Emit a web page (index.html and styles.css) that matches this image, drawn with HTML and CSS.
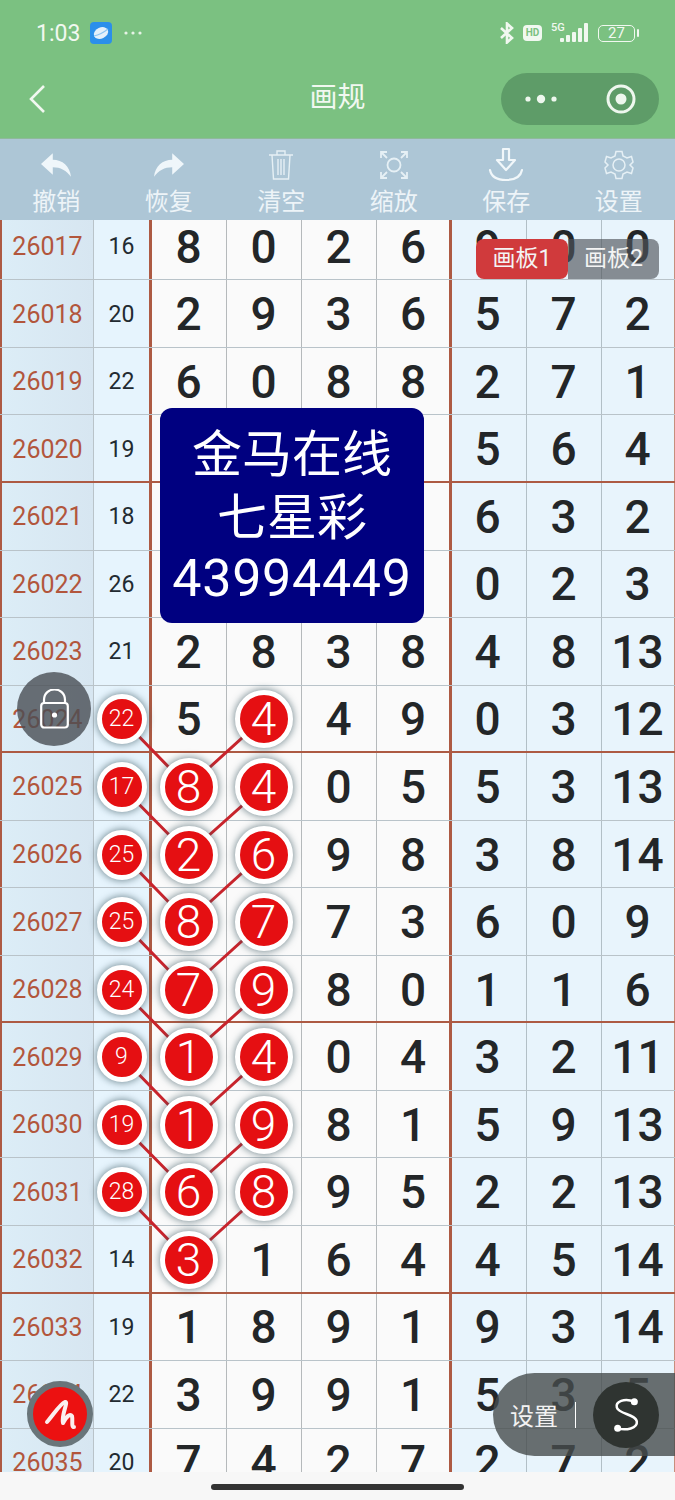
FILE: index.html
```html
<!DOCTYPE html>
<html lang="zh-CN">
<head>
    <meta charset="UTF-8">
    <meta name="viewport" content="width=device-width, initial-scale=1.0">
    <title>画规</title>
    <link rel="stylesheet" href="styles.css">
</head>
<body>
<div class="screen">

    <header class="top">
        <div class="status">
            <div class="status-left">
                <span class="clock">1:03</span>
                <svg class="app-dot" width="22" height="22" viewBox="0 0 22 22">
                    <rect width="22" height="22" rx="4" fill="#2b8fea"/>
                    <ellipse cx="11" cy="11" rx="7.5" ry="5.5" fill="#e4f0fa" transform="rotate(-25 11 11)"/>
                    <path d="M4 14 Q11 12.5 18 7" stroke="#8cc4f2" stroke-width="1.2" fill="none"/>
                </svg>
                <svg width="18" height="4" viewBox="0 0 18 4" fill="#e6f3e6">
                    <circle cx="2" cy="2" r="1.6"/><circle cx="9" cy="2" r="1.6"/><circle cx="16" cy="2" r="1.6"/>
                </svg>
            </div>
            <div class="status-right">
                <svg width="14" height="22" viewBox="0 0 14 22" fill="none" stroke="#f1f8f0" stroke-width="2.6">
                    <path d="M1 6 L12 16 L7 20.5 V1.5 L12 6 L1 16"/>
                </svg>
                <span class="hd">HD</span>
                <span class="net">
                    <span class="net-label">5G</span>
                    <svg width="28" height="20" viewBox="0 0 28 20" fill="#f1f8f0">
                        <rect x="0" y="15" width="4" height="4" rx="1"/>
                        <rect x="6" y="12" width="4" height="7" rx="1"/>
                        <rect x="12" y="9" width="4" height="10" rx="1"/>
                        <rect x="18" y="5" width="4" height="14" rx="1"/>
                        <rect x="24" y="0" width="4" height="19" rx="1"/>
                    </svg>
                </span>
                <span class="battery">27</span>
            </div>
        </div>
        <div class="nav">
            <svg class="back" width="18" height="30" viewBox="0 0 18 30" fill="none" stroke="#f1f8f0" stroke-width="2.6">
                <path d="M16 2 L3 15 L16 28"/>
            </svg>
            <span class="title">画规</span>
            <div class="capsule">
                <svg width="34" height="12" viewBox="0 0 34 12" fill="#eef7ee">
                    <circle cx="4" cy="6" r="2.6"/><circle cx="17" cy="6" r="4.2"/><circle cx="30" cy="6" r="2.6"/>
                </svg>
                <svg width="32" height="32" viewBox="0 0 32 32">
                    <circle cx="16" cy="16" r="13" fill="none" stroke="#eef7ee" stroke-width="3"/>
                    <circle cx="16" cy="16" r="5.5" fill="#eef7ee"/>
                </svg>
            </div>
        </div>
    </header>

    <div class="tools">
        <div class="tool">
            <svg width="30" height="24" viewBox="0 0 28 22" fill="#eff6fa">
                <path d="M0 10 L11 0 V6 C20 6 27 12 28 22 C24 16 18 13 11 13 V20 Z"/>
            </svg>
            <span>撤销</span>
        </div>
        <div class="tool">
            <svg width="30" height="24" viewBox="0 0 28 22" fill="#eff6fa">
                <path d="M28 10 L17 0 V6 C8 6 1 12 0 22 C4 16 10 13 17 13 V20 Z"/>
            </svg>
            <span>恢复</span>
        </div>
        <div class="tool">
            <svg width="26" height="32" viewBox="0 0 26 32" fill="none" stroke="#e6f0f5" stroke-width="1.4">
                <path d="M1 6 H25 M9 6 V2 H17 V6 M4 6 L5.5 30 H20.5 L22 6 M10 10 V26 M13 10 V26 M16 10 V26"/>
            </svg>
            <span>清空</span>
        </div>
        <div class="tool">
            <svg width="30" height="30" viewBox="0 0 30 30" fill="none" stroke="#e6f0f5" stroke-width="1.8">
                <circle cx="15" cy="15" r="6.5"/>
                <path d="M2 8 V2 H8 M2 2 L8 8 M28 8 V2 H22 M28 2 L22 8 M2 22 V28 H8 M2 28 L8 22 M28 22 V28 H22 M28 28 L22 22"/>
            </svg>
            <span>缩放</span>
        </div>
        <div class="tool">
            <svg width="36" height="36" viewBox="0 0 36 36" fill="none" stroke="#f1f7fa" stroke-width="2.2" stroke-linejoin="round" stroke-linecap="round">
                <path d="M15 2 H21 V13 H27 L18 23 L9 13 H15 Z"/>
                <path d="M2 23 Q4 33 18 33 Q32 33 34 23"/>
            </svg>
            <span>保存</span>
        </div>
        <div class="tool">
            <svg width="30" height="30" viewBox="0 0 30 30" fill="none" stroke="#e6f0f5" stroke-width="1.5">
                <path d="M12 1.5 H18 L19 6 L23 8 L27.5 6.5 L29 12 L26 15 L29 18 L27.5 23.5 L23 22 L19 24 L18 28.5 H12 L11 24 L7 22 L2.5 23.5 L1 18 L4 15 L1 12 L2.5 6.5 L7 8 L11 6 Z"/>
                <circle cx="15" cy="15" r="6"/>
            </svg>
            <span>设置</span>
        </div>
    </div>

    <main class="board">
        <div class="rows">
            <div class="row"><span class="id">26017</span><span class="sum">16</span><span class="num">8</span><span class="num">0</span><span class="num">2</span><span class="num">6</span><span class="num">9</span><span class="num">0</span><span class="num">0</span></div>
            <div class="row"><span class="id">26018</span><span class="sum">20</span><span class="num">2</span><span class="num">9</span><span class="num">3</span><span class="num">6</span><span class="num">5</span><span class="num">7</span><span class="num">2</span></div>
            <div class="row"><span class="id">26019</span><span class="sum">22</span><span class="num">6</span><span class="num">0</span><span class="num">8</span><span class="num">8</span><span class="num">2</span><span class="num">7</span><span class="num">1</span></div>
            <div class="row major"><span class="id">26020</span><span class="sum">19</span><span class="num"></span><span class="num"></span><span class="num"></span><span class="num"></span><span class="num">5</span><span class="num">6</span><span class="num">4</span></div>
            <div class="row"><span class="id">26021</span><span class="sum">18</span><span class="num"></span><span class="num"></span><span class="num"></span><span class="num"></span><span class="num">6</span><span class="num">3</span><span class="num">2</span></div>
            <div class="row"><span class="id">26022</span><span class="sum">26</span><span class="num"></span><span class="num"></span><span class="num"></span><span class="num"></span><span class="num">0</span><span class="num">2</span><span class="num">3</span></div>
            <div class="row"><span class="id">26023</span><span class="sum">21</span><span class="num">2</span><span class="num">8</span><span class="num">3</span><span class="num">8</span><span class="num">4</span><span class="num">8</span><span class="num">13</span></div>
            <div class="row major"><span class="id">26024</span><span class="sum"><b class="ball small">22</b></span><span class="num">5</span><span class="num"><b class="ball">4</b></span><span class="num">4</span><span class="num">9</span><span class="num">0</span><span class="num">3</span><span class="num">12</span></div>
            <div class="row"><span class="id">26025</span><span class="sum"><b class="ball small">17</b></span><span class="num"><b class="ball">8</b></span><span class="num"><b class="ball">4</b></span><span class="num">0</span><span class="num">5</span><span class="num">5</span><span class="num">3</span><span class="num">13</span></div>
            <div class="row"><span class="id">26026</span><span class="sum"><b class="ball small">25</b></span><span class="num"><b class="ball">2</b></span><span class="num"><b class="ball">6</b></span><span class="num">9</span><span class="num">8</span><span class="num">3</span><span class="num">8</span><span class="num">14</span></div>
            <div class="row"><span class="id">26027</span><span class="sum"><b class="ball small">25</b></span><span class="num"><b class="ball">8</b></span><span class="num"><b class="ball">7</b></span><span class="num">7</span><span class="num">3</span><span class="num">6</span><span class="num">0</span><span class="num">9</span></div>
            <div class="row major"><span class="id">26028</span><span class="sum"><b class="ball small">24</b></span><span class="num"><b class="ball">7</b></span><span class="num"><b class="ball">9</b></span><span class="num">8</span><span class="num">0</span><span class="num">1</span><span class="num">1</span><span class="num">6</span></div>
            <div class="row"><span class="id">26029</span><span class="sum"><b class="ball small">9</b></span><span class="num"><b class="ball">1</b></span><span class="num"><b class="ball">4</b></span><span class="num">0</span><span class="num">4</span><span class="num">3</span><span class="num">2</span><span class="num">11</span></div>
            <div class="row"><span class="id">26030</span><span class="sum"><b class="ball small">19</b></span><span class="num"><b class="ball">1</b></span><span class="num"><b class="ball">9</b></span><span class="num">8</span><span class="num">1</span><span class="num">5</span><span class="num">9</span><span class="num">13</span></div>
            <div class="row"><span class="id">26031</span><span class="sum"><b class="ball small">28</b></span><span class="num"><b class="ball">6</b></span><span class="num"><b class="ball">8</b></span><span class="num">9</span><span class="num">5</span><span class="num">2</span><span class="num">2</span><span class="num">13</span></div>
            <div class="row major"><span class="id">26032</span><span class="sum">14</span><span class="num"><b class="ball">3</b></span><span class="num">1</span><span class="num">6</span><span class="num">4</span><span class="num">4</span><span class="num">5</span><span class="num">14</span></div>
            <div class="row"><span class="id">26033</span><span class="sum">19</span><span class="num">1</span><span class="num">8</span><span class="num">9</span><span class="num">1</span><span class="num">9</span><span class="num">3</span><span class="num">14</span></div>
            <div class="row"><span class="id">26034</span><span class="sum">22</span><span class="num">3</span><span class="num">9</span><span class="num">9</span><span class="num">1</span><span class="num">5</span><span class="num">3</span><span class="num">5</span></div>
            <div class="row"><span class="id">26035</span><span class="sum">20</span><span class="num">7</span><span class="num">4</span><span class="num">2</span><span class="num">7</span><span class="num">2</span><span class="num">7</span><span class="num">2</span></div>
        </div>

        <!-- lines joining the balls, board coordinates -->
        <svg class="links" width="675" height="1252" viewBox="0 0 675 1252" stroke="#c8242c" stroke-width="3">
            <path d="M122 499 L188 567 M263 499 L188 567 M122 567 L188 634 M263 567 L188 634 M122 634 L188 702 M263 634 L188 702 M122 702 L188 770 M263 702 L188 770 M122 770 L188 837 M263 770 L188 837 M122 837 L188 905 M263 837 L188 905 M122 905 L188 972 M263 905 L188 972 M122 972 L188 1040 M263 972 L188 1040"/>
        </svg>

        <div class="tabs">
            <span class="tab on">画板1</span>
            <span class="tab">画板2</span>
        </div>

        <div class="ad">金马在线<br>七星彩<br><span class="ad-num">43994449</span></div>

        <div class="lock">
            <svg width="29" height="40" viewBox="0 0 29 40" fill="none" stroke="#fff" stroke-width="2.2">
                <path d="M4 14 V11 C4 -3 25 -3 25 11 V14"/>
                <rect x="1.2" y="14" width="26.6" height="24.5" rx="3"/>
                <circle cx="14.5" cy="26" r="2.6" fill="#fff" stroke="none"/>
            </svg>
        </div>

        <div class="pen">
            <svg width="66" height="66" viewBox="0 0 66 66" fill="none" stroke="#fbeeee" stroke-width="4" stroke-linecap="round" stroke-linejoin="round">
                <path d="M20 41 C27 33 33 23 38 21 C42 20 34 34 36 42 C39 36 43 32 45 35 C46 39 44 46 47 46"/>
            </svg>
        </div>

        <div class="helper">
            <span>设置</span>
            <i class="bar"></i>
            <div class="helper-s">
                <svg width="30" height="38" viewBox="0 0 36 44" fill="none" stroke="#fff" stroke-width="3">
                    <path d="M28 6 C16 1 5 6 7 13 C9 21 30 21 31 30 C32 38 18 41 8 38"/>
                    <circle cx="28" cy="6" r="4.2" fill="#fff" stroke="none"/>
                    <circle cx="8" cy="38" r="4.2" fill="#fff" stroke="none"/>
                </svg>
            </div>
        </div>
    </main>

    <footer class="home"><i class="home-bar"></i></footer>
</div>
</body>
</html>
```
FILE: styles.css
```css
* {
    box-sizing: border-box;
}

body {
    margin: 0;
    font-family: Roboto, "Noto Sans CJK SC", sans-serif;
}

.screen {
    width: 675px;
    height: 1500px;
    display: flex;
    flex-direction: column;
    overflow: hidden;
}

/* green title area */
.top {
    height: 139px;
    background-color: #7bc181;
    border-bottom: 1px solid #8fb99b;
    color: #f1f8f0;
}

.status {
    height: 66px;
    display: flex;
    justify-content: space-between;
    align-items: center;
    padding: 0 36px 0 36px;
}

.status-left, .status-right {
    display: flex;
    align-items: center;
}

.clock {
    width: 54px;
    font-size: 23px;
}

.app-dot {
    margin-right: 12px;
}

.status-right {
    gap: 9px;
}

.hd {
    width: 19px;
    height: 16px;
    background-color: #f1f8f0;
    border-radius: 4px;
    color: #7bc181;
    font-size: 10px;
    font-weight: 700;
    line-height: 16px;
    text-align: center;
}

.net {
    display: flex;
    align-items: flex-end;
    position: relative;
    padding-left: 9px;
    height: 20px;
}

.net-label {
    position: absolute;
    left: 0;
    top: -2px;
    font-size: 11px;
    font-weight: 500;
}

.battery {
    position: relative;
    width: 37px;
    height: 17px;
    margin-left: 1px;
    margin-right: 4px;
    border: 1.5px solid #f1f8f0;
    border-radius: 5px;
    font-size: 15px;
    line-height: 14px;
    text-align: center;
}

.battery::after {
    content: "";
    position: absolute;
    right: -5px;
    top: 3px;
    width: 2px;
    height: 8px;
    border-radius: 1px;
    background-color: #f1f8f0;
}

.nav {
    height: 72px;
    display: flex;
    align-items: center;
    justify-content: space-between;
    padding: 0 16px 6px 28px;
    position: relative;
}

.title {
    position: absolute;
    left: 0;
    right: 0;
    top: 13px;
    text-align: center;
    font-size: 28px;
    line-height: 38px;
}

.capsule {
    width: 158px;
    height: 52px;
    border-radius: 26px;
    background-color: #5e9c68;
    display: flex;
    align-items: center;
    justify-content: space-between;
    padding: 0 22px 0 23px;
}

/* tool row */
.tools {
    height: 81px;
    background-color: #adc6d6;
    display: flex;
    position: relative;
    z-index: 4;
}

.tool {
    flex: 1;
    display: flex;
    flex-direction: column;
    align-items: center;
    color: #edf4f8;
    font-size: 24px;
    line-height: 30px;
    position: relative;
    padding-top: 48px;
}

.tool svg {
    position: absolute;
    left: 50%;
    top: 26px;
    transform: translate(-50%, -50%);
}

/* the number table */
.board {
    flex: 1;
    position: relative;
    overflow: hidden;
    background-color: #fafafa;
}

.rows {
    margin-top: -7.2px;
}

.row {
    position: relative;
    height: 67.55px;
    display: grid;
    grid-template-columns: 94px 58px 75px 75px 75px 75px 75px 75px 73px;
}

.row::after {
    content: "";
    position: absolute;
    left: 0;
    right: 0;
    bottom: 0;
    height: 1px;
    background-color: #b9c3c9;
}

.row.major::after {
    height: 3px;
    bottom: -1px;
    background-color: #ad5a43;
}

.row > span {
    display: flex;
    align-items: center;
    justify-content: center;
}

.id {
    background: linear-gradient(to right, #dcedf7, #d7e6f1);
    border-left: 2px solid #ad5a43;
    border-right: 1px solid #b9c3c9;
    color: #b2563c;
    font-size: 25px;
}

.sum {
    background-color: #e6f4fd;
    border-right: 3px solid #ad5a43;
    color: #222a30;
    font-size: 23px;
}

.num {
    background-color: #fafafa;
    border-right: 1px solid #b5b9bb;
    padding-right: 1px;
    color: #232628;
    font-size: 46px;
    font-weight: 500;
}

.num:nth-child(6) {
    border-right: 3px solid #ad5a43;
    padding-right: 0;
}

.num:nth-child(n+7) {
    background-color: #e8f4fc;
    border-right-color: #b2bfc6;
}

.num:nth-child(7) {
    padding-right: 3px;
}

.num:last-child {
    border-right: 1px solid #c88d7c;
}

.ball {
    position: relative;
    z-index: 2;
    flex: none;
    width: 58px;
    height: 58px;
    border: 5px solid #fff;
    border-radius: 50%;
    background-color: #e50f12;
    box-shadow: 0 0 7px 1px rgba(50, 80, 90, 0.6);
    color: #fff;
    font-weight: 350;
    font-size: 46px;
    line-height: 48px;
    text-align: center;
}

.ball.small {
    width: 50px;
    height: 50px;
    font-size: 23px;
    line-height: 40px;
}

.links {
    position: absolute;
    left: 0;
    top: 0;
    z-index: 1;
}

/* things floating over the table */
.tabs {
    position: absolute;
    left: 476px;
    top: 19px;
    z-index: 3;
    display: flex;
    color: #f4f4f4;
    font-size: 23px;
}

.tab {
    width: 91px;
    height: 40px;
    line-height: 40px;
    text-align: center;
    background-color: rgba(80, 85, 90, 0.65);
    border-radius: 0 8px 8px 0;
}

.tab.on {
    width: 92px;
    background-color: #d03a3c;
    border-radius: 8px;
    position: relative;
    z-index: 1;
}

.ad {
    position: absolute;
    left: 160px;
    top: 188px;
    z-index: 3;
    width: 264px;
    height: 215px;
    padding-top: 16px;
    border-radius: 12px;
    background-color: #000080;
    color: #fff;
    font-size: 50px;
    line-height: 63px;
    text-align: center;
}

.ad-num {
    display: block;
    font-size: 52px;
    line-height: 58px;
    letter-spacing: 0.7px;
}

.lock {
    position: absolute;
    left: 17px;
    top: 452px;
    z-index: 3;
    width: 74px;
    height: 74px;
    border-radius: 50%;
    background-color: rgba(72, 78, 84, 0.8);
    display: flex;
    align-items: center;
    justify-content: center;
}

.pen {
    position: absolute;
    left: 27px;
    top: 1161px;
    z-index: 3;
    width: 66px;
    height: 66px;
    border: 6px solid #69757a;
    border-radius: 50%;
    background-color: #ec1111;
    display: flex;
    align-items: center;
    justify-content: center;
}

.pen svg {
    flex: none;
}

.helper {
    position: absolute;
    right: 0;
    top: 1153px;
    z-index: 3;
    width: 182px;
    height: 83px;
    border-radius: 41.5px 0 0 41.5px;
    background-color: rgba(70, 76, 76, 0.8);
    display: flex;
    align-items: center;
    padding-left: 17px;
    color: #f2f2f2;
    font-size: 24px;
}

.bar {
    width: 1px;
    height: 26px;
    background-color: #fff;
    margin: 0 17px 0 17px;
}

.helper-s {
    width: 66px;
    height: 66px;
    border-radius: 50%;
    background-color: #2f3431;
    display: flex;
    align-items: center;
    justify-content: center;
}

.home {
    height: 28px;
    background-color: #f7f7f7;
    display: flex;
    justify-content: center;
    position: relative;
    z-index: 4;
}

.home-bar {
    width: 253px;
    height: 6px;
    margin-top: 12px;
    border-radius: 3px;
    background-color: #333;
}
```
